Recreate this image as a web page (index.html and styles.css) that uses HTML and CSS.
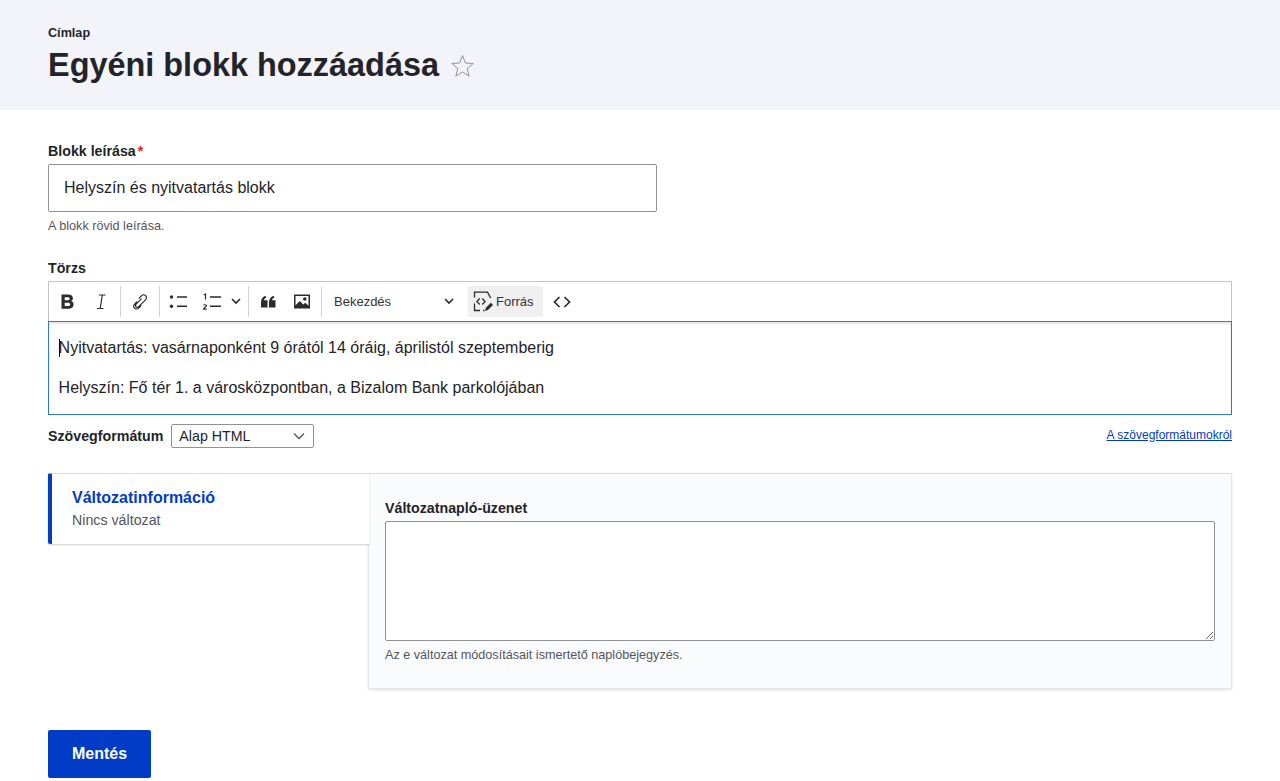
FILE: index.html
```html
<!DOCTYPE html>
<html>
    <head>
        <meta charset="utf-8">
        <title>Egyéni blokk hozzáadása</title>
        <link rel="stylesheet" href="styles.css">
    </head>
    <body>
        <header class="page-head">
            <a class="crumb" href="#">Címlap</a>
            <div class="title-row">
                <h1>Egyéni blokk hozzáadása</h1>
                <svg class="star" width="25" height="25" viewBox="0 0 25 25"><path d="M12.5 2.600l2.900 7.400 7.900.5-6.100 5 2 7.700-6.700-4.300-6.700 4.300 2-7.700-6.100-5 7.900-.5z" fill="none" stroke="#8e929c" stroke-width="1"/></svg>
            </div>
        </header>
        <main class="content">
            <div class="field">
                <label class="label">Blokk leírása<span class="req">*</span></label>
                <input class="text-input" type="text" value="Helyszín és nyitvatartás blokk">
                <div class="hint">A blokk rövid leírása.</div>
            </div>

            <div class="label body-label">Törzs</div>
            <div class="toolbar">
                <button class="tb-btn"><svg width="20" height="20" viewBox="0 0 20 20"><path d="M4.500 2.500h6.800c2.900 0 4.600 1.400 4.600 3.700 0 1.300-.7 2.400-1.900 2.900 1.600.5 2.600 1.700 2.600 3.400 0 2.600-1.900 4.200-4.900 4.200H4.500zM7.700 5.200v3h3.200c1.100 0 1.800-.6 1.800-1.500s-.7-1.500-1.800-1.500zM7.700 10.800v3.100h3.500c1.300 0 2-.6 2-1.500s-.7-1.600-2-1.600z" fill="#2b2b30" fill-rule="evenodd"/></svg></button>
                <button class="tb-btn"><svg width="20" height="20" viewBox="0 0 20 20"><path d="M8 3h6.500M6 16.500h6.500M11.300 3L9.200 16.500" fill="none" stroke="#2b2b30" stroke-width="1.200"/></svg></button>
                <span class="tb-sep"></span>
                <button class="tb-btn tb-link"><svg width="20" height="20" viewBox="0 0 20 20"><path d="M9.200 6.200l2.300-2.400c1.200-1.200 3-1.200 4.100-.1 1.100 1.100 1.100 2.900-.1 4.100l-6.800 6.900c-.8.800-2 .8-2.700.1-.7-.7-.7-1.900.1-2.700l5.200-5.200M6.600 10l-2 2.100c-1.200 1.200-1.200 3-.1 4.100 1.100 1.100 2.900 1.100 4.100-.1l2.300-2.300" fill="none" stroke="#2b2b30" stroke-width="1.200" stroke-linecap="round"/></svg></button>
                <span class="tb-sep"></span>
                <button class="tb-btn"><svg width="20" height="20" viewBox="0 0 20 20"><circle cx="3.500" cy="5" r="1.700" fill="#2b2b30"/><circle cx="3.500" cy="14.300" r="1.700" fill="#2b2b30"/><path d="M9 5h10M9 14.300h10" stroke="#2b2b30" stroke-width="1.500"/></svg></button>
                <button class="tb-btn"><svg width="20" height="20" viewBox="0 0 20 20"><path d="M8 5h11M8 14.300h11" stroke="#2b2b30" stroke-width="1.500"/><path d="M1.800 3l1.700-1v5.500M1.500 13.300c.5-.8 3-.8 3 .4 0 1-3 1.700-3 3.500h3.200" fill="none" stroke="#2b2b30" stroke-width="1.200"/></svg></button>
                <svg class="tb-arrow" width="10" height="10" viewBox="0 0 10 10"><path d="M1 3l4 4 4-4" fill="none" stroke="#2b2b30" stroke-width="1.700"/></svg>
                <span class="tb-sep tb-sep-close"></span>
                <button class="tb-btn"><svg width="20" height="20" viewBox="0 0 20 20"><path d="M3 15.500v-5c0-3.300 1.500-5.500 4.600-6.700l.8 1.600C6.900 6.100 6.100 7 6 8.200h3.500v7.300zM11 15.500v-5c0-3.300 1.500-5.500 4.600-6.700l.8 1.600c-1.500.7-2.300 1.600-2.400 2.800h3.500v7.300z" fill="#2b2b30"/></svg></button>
                <button class="tb-btn"><svg width="20" height="20" viewBox="0 0 20 20"><path d="M2 2.500h16v14H2zM3.500 4v9.300l4.300-4.300 3.500 3.600 2-1.800 3.200 3V4z" fill="#2b2b30" fill-rule="evenodd"/><circle cx="12.800" cy="7" r="1.800" fill="#2b2b30"/></svg></button>
                <span class="tb-sep"></span>
                <div class="tb-heading">Bekezdés<svg width="10" height="10" viewBox="0 0 10 10"><path d="M1 3l4 4 4-4" fill="none" stroke="#2b2b30" stroke-width="1.700"/></svg></div>
                <button class="tb-source">
                    <svg width="20" height="22" viewBox="0 0 20 22"><path d="M1.500 6.500V1.200h13l3.200 5.800M1.500 12.500v7h5.500M10 19.500h1.500" fill="none" stroke="#2b2b30" stroke-width="1.300"/><path d="M6.700 7.500L3.900 10.500 6.700 13.500M9.300 7.500l2.800 3-2.800 3" fill="none" stroke="#2b2b30" stroke-width="1.300"/><path d="M12 20l.9-3.300 5-5 2.100 2.200-5 5z" fill="#2b2b30"/></svg>
                    Forrás
                </button>
                <button class="tb-btn tb-code"><svg width="20" height="20" viewBox="0 0 20 20"><path d="M7.500 5L2.500 10l5 5M12.500 5l5 5-5 5" fill="none" stroke="#2b2b30" stroke-width="1.700"/></svg></button>
            </div>
            <div class="editor">
                <p><span class="caret"></span>Nyitvatartás: vasárnaponként 9 órától 14 óráig, áprilistól szeptemberig</p>
                <p>Helyszín: Fő tér 1. a városközpontban, a Bizalom Bank parkolójában</p>
            </div>
            <div class="format-row">
                <label class="label format-label">Szövegformátum</label>
                <div class="select">Alap HTML<svg width="12" height="8" viewBox="0 0 12 8"><path d="M1 1.500l5 5 5-5" fill="none" stroke="#55565b" stroke-width="1.300"/></svg></div>
                <a class="format-link" href="#">A szövegformátumokról</a>
            </div>

            <div class="tabs">
                <div class="tab-menu">
                    <a class="tab-title" href="#">Változatinformáció</a>
                    <div class="tab-sub">Nincs változat</div>
                </div>
                <div class="tab-pane">
                    <label class="label">Változatnapló-üzenet</label>
                    <textarea class="log"></textarea>
                    <div class="hint">Az e változat módosításait ismertető naplóbejegyzés.</div>
                </div>
            </div>

            <button class="save">Mentés</button>
        </main>
    </body>
</html>
```

FILE: styles.css
```css
html{height:100%}
body{margin:0; height:781px; overflow:hidden; font-family:"Liberation Sans", Arial, sans-serif; font-size:16px; color:#232429; background-color:#fff}
.page-head{background-color:#f3f4f9; height:110px; padding:0 48px; box-sizing:border-box}
.crumb{display:block; padding-top:25px; font-size:12.640px; line-height:16px; font-weight:bold; color:#232429; text-decoration:none}
.title-row{display:flex; align-items:center; gap:11px; margin-top:3px}
h1{margin:0; font-size:32.440px; line-height:42px; font-weight:bold; color:#232429}
.star{margin-top:1px}
.content{padding:32px 48px 0}
.label{display:block; font-size:14.220px; line-height:18px; font-weight:bold; color:#232429}
.req{color:#dc2323; margin-left:2px}
.text-input{display:block; box-sizing:border-box; width:609px; height:48px; margin-top:4px; padding:0 15px; border:1px solid #919297; border-radius:2px; font:16px "Liberation Sans", Arial, sans-serif; color:#232429}
.hint{margin-top:6px; font-size:12.640px; line-height:16px; color:#55565b}
.body-label{margin-top:25px}
.toolbar{display:flex; align-items:flex-start; box-sizing:border-box; height:40px; margin-top:4px; padding:4px 2px 0 1px; border:1px solid #c4c4c4; border-bottom:0; background-color:#fff}
.tb-btn{display:flex; align-items:center; justify-content:center; width:34px; height:31px; padding:0; border:0; background:none}
.tb-link{margin-left:1px}
.tb-arrow{margin-left:2px; margin-top:10px}
.tb-sep{width:1px; height:31px; margin:0 1px 0 2px; background-color:#d4d4d4}
.tb-sep-close{margin-left:7px; margin-right:2px}
.tb-heading{display:flex; align-items:center; justify-content:space-between; box-sizing:border-box; width:140px; height:30px; padding:0 9px 0 11px; font-size:13px; color:#333}
.tb-source{display:flex; align-items:center; gap:3px; width:75px; height:31px; margin-left:5px; padding:0 0 0 5px; border:0; border-radius:2px; background-color:#f0f0f0; font:13px "Liberation Sans", Arial, sans-serif; color:#333}
.tb-code{margin-left:2px}
.editor{box-sizing:border-box; height:94px; padding:16px 9.600px 0; border:1px solid #2f74e0; box-shadow:inset 0 2px 2px rgba(0,0,0,.1); font-size:16px; line-height:20px}
.editor p{margin:0 0 20px}
.caret{display:inline-block; width:1px; height:18px; margin-bottom:-4px; margin-right:-1px; background-color:#000}
.format-row{display:flex; align-items:center; height:24px; margin-top:9px}
.format-label{margin-right:8px}
.select{display:flex; align-items:center; justify-content:space-between; box-sizing:border-box; width:143px; height:24px; padding:0 8px 0 7px; border:1px solid #919297; border-radius:2px; font-size:14.220px; color:#232429}
.format-link{margin-left:auto; margin-bottom:3px; font-size:12px; color:#003cc5}
.tabs{display:flex; margin-top:25px; align-items:flex-start}
.tab-menu{box-sizing:border-box; position:relative; z-index:1; width:321px; height:71px; margin-right:-1px; padding:14px 20px 0; border-left:4px solid #003cc5; border-top:1px solid #dedee3; border-radius:2px 0 0 2px; background-color:#fff; box-shadow:0 1px 2px rgba(0,0,0,.2)}
.tab-title{display:block; font-size:16px; line-height:20px; font-weight:bold; color:#003cc5; text-decoration:none}
.tab-sub{margin-top:3px; font-size:14.220px; line-height:18px; color:#55565b}
.tab-pane{box-sizing:border-box; width:864px; height:216px; padding:25px 16px 0; border:1px solid #e4e5ea; border-top-color:#dedee3; background-color:#fafbfd; box-shadow:0 1px 3px rgba(0,0,0,.12)}
.log{display:block; box-sizing:border-box; width:830px; height:120px; margin-top:4px; border:1px solid #919297; border-radius:2px; background-color:#fff}
.tab-pane .hint{margin-top:6px}
.save{display:block; width:103px; height:48px; margin-top:41px; padding:0; border:0; border-radius:2px; background-color:#003cc5; color:#fff; font:bold 16px "Liberation Sans", Arial, sans-serif}
```
